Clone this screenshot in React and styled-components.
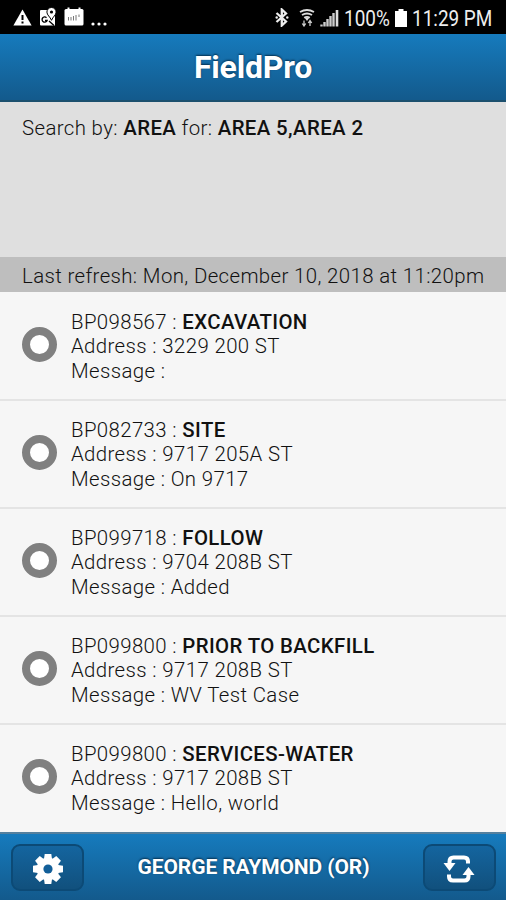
import styled, { createGlobalStyle } from "styled-components";

const inspections = [
    { id: "BP098567", type: "EXCAVATION", address: "3229 200 ST", message: "" },
    { id: "BP082733", type: "SITE", address: "9717 205A ST", message: "On 9717" },
    { id: "BP099718", type: "FOLLOW", address: "9704 208B ST", message: "Added" },
    { id: "BP099800", type: "PRIOR TO BACKFILL", address: "9717 208B ST", message: "WV Test Case" },
    { id: "BP099800", type: "SERVICES-WATER", address: "9717 208B ST", message: "Hello, world" },
]

export default function App(){

    return (
        <Screen>
            <GlobalStyle />
            <StatusBar>
                <Notifications>
                    <WarningIcon />
                    <MapIcon />
                    <CalendarIcon />
                    <DotsIcon />
                </Notifications>
                <SystemInfo>
                    <BluetoothIcon />
                    <WifiIcon />
                    <SignalIcon />
                    <Percent>100%</Percent>
                    <BatteryIcon />
                    <Clock>11:29 PM</Clock>
                </SystemInfo>
            </StatusBar>

            <Header>
                <Title>FieldPro</Title>
            </Header>

            <SearchInfo>
                Search by: <b>AREA</b> for: <b>AREA 5,AREA 2</b>
            </SearchInfo>
            <Refresh>Last refresh: Mon, December 10, 2018 at 11:20pm</Refresh>

            <List>
                {inspections.map((item, i) => (
                    <Item key={i}>
                        <Ring />
                        <Details>
                            <p>{item.id} : <b>{item.type}</b></p>
                            <p>Address : {item.address}</p>
                            <p>Message : {item.message}</p>
                        </Details>
                    </Item>
                ))}
            </List>

            <Footer>
                <FooterButton aria-label="Settings"><GearIcon /></FooterButton>
                <UserName>GEORGE RAYMOND (OR)</UserName>
                <FooterButton aria-label="Refresh"><RefreshIcon /></FooterButton>
            </Footer>
        </Screen>
    )

}

function WarningIcon(){
    return (
        <svg width="19" height="17" viewBox="0 0 19 17">
            <path d="M9.5 0.5L18.6 16.5H0.4Z" fill="#fff" />
            <path d="M9.5 6v5M9.5 12.4v2" stroke="#000" strokeWidth="2" />
        </svg>
    )
}

function MapIcon(){
    return (
        <svg width="18" height="19" viewBox="0 0 18 19">
            <path d="M2 3h14v15.500H2Q1 18.500 1 17.500V4Q1 3 2 3Z" fill="#fff" />
            <path d="M12.500 0.500a4.600 4.600 0 0 1 4.600 4.600c0 3-3.200 4.600-4.600 8.200c-1.400-3.600-4.600-5.200-4.600-8.200a4.600 4.600 0 0 1 4.600-4.600Z" fill="#fff" stroke="#000" strokeWidth="1" />
            <circle cx="12.500" cy="5" r="1.600" fill="#000" />
            <path d="M7.500 10.700a2.600 2.600 0 1 0 0.600 2.800H6M10 14l5 4.500" fill="none" stroke="#000" strokeWidth="1.300" />
        </svg>
    )
}

function CalendarIcon(){
    return (
        <svg width="20" height="19" viewBox="0 0 20 19">
            <path d="M4.500 0.500v4M15.500 0.500v4" stroke="#fff" strokeWidth="2" />
            <rect x="0.500" y="2" width="19" height="16.500" rx="1.500" fill="#fff" />
            <path d="M4.500 10v3.500M7 10v3.500M9.500 9v4.500M12 8v5.500M15 7.500v2.500" stroke="#777" strokeWidth="1" />
        </svg>
    )
}

function DotsIcon(){
    return (
        <svg width="16" height="4" viewBox="0 0 16 4">
            <circle cx="2" cy="2" r="1.600" fill="#fff" />
            <circle cx="8" cy="2" r="1.600" fill="#fff" />
            <circle cx="14" cy="2" r="1.600" fill="#fff" />
        </svg>
    )
}

function BluetoothIcon(){
    return (
        <svg width="14" height="19" viewBox="0 0 14 19">
            <path d="M1.500 5L11 13.500L6.800 17.500V1.500L11 5.500L1.500 14" fill="none" stroke="#eee" strokeWidth="2.300" />
            <circle cx="1.700" cy="9.500" r="1.200" fill="#eee" />
            <circle cx="12.300" cy="9.500" r="1.200" fill="#eee" />
        </svg>
    )
}

function WifiIcon(){
    return (
        <svg width="16" height="18" viewBox="0 0 16 18">
            <path d="M1 3Q8-1 15 3M3 6Q8 3 13 6M5.200 8.800Q8 7 10.800 8.800" fill="none" stroke="#ddd" strokeWidth="1.900" />
            <path d="M5.500 8.500h5l-2.500 3.500Z" fill="#ddd" />
            <path d="M5 11.500v5M3.300 14.500L5 17L6.700 14.500M11 17v-5M9.300 14L11 11.500L12.700 14" fill="none" stroke="#ccc" strokeWidth="1.300" />
        </svg>
    )
}

function SignalIcon(){
    return (
        <svg width="19" height="18" viewBox="0 0 19 18">
            <path d="M1.500 17.500v-2M4.500 17.500v-4.500M7.500 17.500v-7.500M10.500 17.500v-10.500M13.500 17.500v-13.500" stroke="#ccc" strokeWidth="2.400" />
            <path d="M17 17.500V1" stroke="#ddd" strokeWidth="2.600" />
        </svg>
    )
}

function BatteryIcon(){
    return (
        <svg width="12" height="18" viewBox="0 0 12 18">
            <path d="M3.500 0h5v2H12v16H0V2H3.500Z" fill="#fff" />
        </svg>
    )
}

function GearIcon(){
    return (
        <svg width="32" height="32" viewBox="-16 -16 32 32">
            {[0, 45, 90, 135].map((deg) => (
                <path key={deg} d="M-4-10L-3.300-15H3.300L4-10V10L3.300 15H-3.300L-4 10Z" fill="#fff" transform={`rotate(${deg})`} />
            ))}
            <circle r="11.300" fill="#fff" />
            <circle r="4.600" fill="#135f99" />
        </svg>
    )
}

function RefreshIcon(){
    return (
        <svg width="32" height="30" viewBox="0 0 32 30">
            <path d="M6.500 11V7.500Q6.500 3.500 10.500 3.500H21Q25 3.500 25 7.500V9.500" fill="none" stroke="#fff" strokeWidth="4" />
            <path d="M0.500 9H12.500L6.500 17Z" fill="#fff" />
            <path d="M25.500 19V22.500Q25.500 26.500 21.500 26.500H10Q6 26.500 6 22.500V20.500" fill="none" stroke="#fff" strokeWidth="4" />
            <path d="M19.500 21H31.500L25.500 13Z" fill="#fff" />
        </svg>
    )
}

const GlobalStyle = createGlobalStyle`
body{
    margin: 0;
    background-color: #f6f6f6;
}
p{
    margin: 0;
}
`

const Screen = styled.div`
width: 100%;
height: 900px;
display: flex;
flex-direction: column;
overflow: hidden;
font-family: Roboto, 'Liberation Sans', sans-serif;
font-size: 20.400px;
font-weight: 300;
letter-spacing: 0.380px;
color: #111;
background-color: #f6f6f6;
b{
    font-weight: 500;
}
`

const StatusBar = styled.div`
box-sizing: border-box;
height: 34px;
padding: 0 14px 0 13px;
display: flex;
justify-content: space-between;
background-color: #000;
`

const Notifications = styled.div`
display: flex;
align-items: flex-end;
padding-bottom: 8px;
gap: 7px;
`

const SystemInfo = styled.div`
display: flex;
align-items: flex-end;
padding-bottom: 7px;
svg{
    margin-right: 5px;
}
svg:first-child{
    margin-right: 10px;
}
`

/* the status bar uses a narrower cut of the font */
const StatusText = styled.span`
font-size: 22px;
font-weight: 400;
letter-spacing: 0;
line-height: 16px;
color: #eee;
white-space: nowrap;
transform: scaleX(0.86);
`

const Percent = styled(StatusText)`
transform-origin: left;
margin-right: -3px;
`

const Clock = styled(StatusText)`
transform-origin: right;
margin-left: -13px;
`

const Header = styled.div`
box-sizing: border-box;
height: 68px;
display: flex;
align-items: center;
justify-content: center;
background: linear-gradient(#167bbd, #135a8c);
border-bottom: 2px solid #1c506e;
`

const Title = styled.h1`
margin: 0;
font-size: 32px;
font-weight: 700;
letter-spacing: -0.2px;
color: #fff;
text-shadow: 0 -1px 2px #05304f;
`

const SearchInfo = styled.div`
box-sizing: border-box;
height: 155px;
padding: 14px 22px;
line-height: 24px;
background-color: #dfdfdf;
`

const Refresh = styled.div`
height: 35px;
padding-left: 22px;
line-height: 38px;
white-space: nowrap;
background-color: #bebebe;
`

const List = styled.div`
flex: 1;
min-height: 0;
padding-top: 1px;
`

const Item = styled.div`
box-sizing: border-box;
height: 108px;
padding: 0 22px;
display: flex;
align-items: center;
gap: 14px;
border-bottom: 2px solid #e4e4e4;
&:last-child{
    border-bottom: 0;
    padding-bottom: 2px;
}
`

const Ring = styled.div`
box-sizing: border-box;
width: 35px;
height: 35px;
margin-top: -4px;
border: 8px solid #808080;
border-radius: 50%;
background-color: #fff;
`

const Details = styled.div`
line-height: 24.400px;
padding-top: 1px;
`

const Footer = styled.div`
box-sizing: border-box;
height: 68px;
padding: 0 10px 0 11px;
display: flex;
align-items: center;
justify-content: space-between;
background: linear-gradient(#167bbd, #135a8c);
border-top: 2px solid #54809e;
`

const FooterButton = styled.button`
box-sizing: border-box;
width: 73px;
height: 47px;
padding: 4px 0 0;
display: flex;
align-items: center;
justify-content: center;
border: 2px solid #0c4a76;
border-radius: 9px;
background: linear-gradient(#14659f, #11507d);
`

const UserName = styled.p`
font-size: 21px;
font-weight: 700;
letter-spacing: -0.100px;
color: #fff;
text-shadow: 0 -1px 2px #05304f;
`
